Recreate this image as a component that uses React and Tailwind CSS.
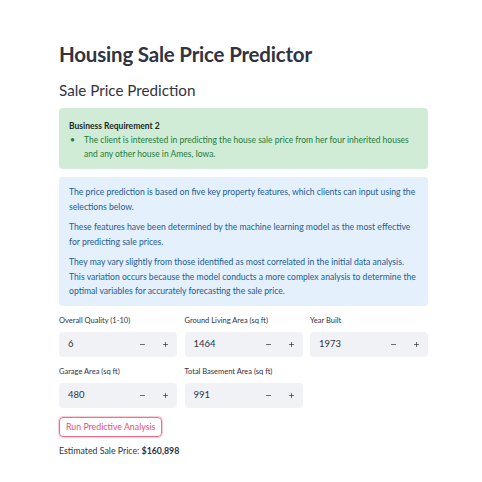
import { Minus, Plus } from 'lucide-react'

const fields = [
  { label: 'Overall Quality (1-10)', value: '6' },
  { label: 'Ground Living Area (sq ft)', value: '1464' },
  { label: 'Year Built', value: '1973' },
  { label: 'Garage Area (sq ft)', value: '480' },
  { label: 'Total Basement Area (sq ft)', value: '991' },
]

function NumberField({ label, value }) {
  return (
    <div>
      <div className="mb-[5px] text-[7.5px] leading-[12px] text-[#31333f]">{label}</div>
      <div className="flex h-[25px] items-center rounded-[4px] bg-[#f0f2f6] text-[#31333f]">
        <div className="flex-1 pl-[9px] text-[9.5px]">{value}</div>
        <div className="flex h-full w-[23px] items-center justify-center">
          <Minus size={7} strokeWidth={2.5} />
        </div>
        <div className="flex h-full w-[23px] items-center justify-center">
          <Plus size={7} strokeWidth={2.5} />
        </div>
      </div>
    </div>
  )
}

export default function App() {
  return (
    <div className="h-[482px] w-[482px] bg-white font-['Lato',sans-serif] text-[#31333f]">
      <div className="ml-[59px] w-[369px] pt-[40px]">
        <h1 className="text-[20.5px] font-bold leading-[28px] tracking-[-0.2px]">Housing Sale Price Predictor</h1>
        <h2 className="mt-[11px] text-[15.2px] font-normal leading-[22px]">Sale Price Prediction</h2>

        <div className="mt-[7px] rounded-[4px] bg-[#d0ecd6] px-[10px] pb-[8px] pt-[11px] text-[8.5px] leading-[14px] text-[#1f7a3c]">
          <div className="font-bold text-[#1e2a22]">Business Requirement 2</div>
          <div className="flex">
            <span className="w-[15px] shrink-0 pl-[1px]">•</span>
            <span>The client is interested in predicting the house sale price from her four inherited houses and any other house in Ames, Iowa.</span>
          </div>
        </div>

        <div className="mt-[8px] rounded-[4px] bg-[#e4f0fb] pb-[7px] pl-[10px] pr-[8px] pt-[8px] text-[8.65px] leading-[14.5px] text-[#235c94]">
          <p>The price prediction is based on five key property features, which clients can input using the selections below.</p>
          <p className="mt-[6px]">These features have been determined by the machine learning model as the most effective for predicting sale prices.</p>
          <p className="mt-[6px]">They may vary slightly from those identified as most correlated in the initial data analysis. This variation occurs because the model conducts a more complex analysis to determine the optimal variables for accurately forecasting the sale price.</p>
        </div>

        <div className="mt-[9px] grid grid-cols-3 gap-x-[7.5px] gap-y-[9px]">
          {fields.map((f) => (
            <NumberField key={f.label} label={f.label} value={f.value} />
          ))}
        </div>

        <button className="mt-[9px] rounded-[4px] border border-[#f06f8c] px-[6px] py-[3px] text-[8.8px] leading-[12px] text-[#ee4c72] shadow-[0_0_0_1px_rgba(240,111,140,0.35)]">
          Run Predictive Analysis
        </button>

        <div className="mt-[7px] text-[8.8px] leading-[14px] text-[#31333f]">
          Estimated Sale Price: <span className="font-bold">$160,898</span>
        </div>
      </div>
    </div>
  )
}
